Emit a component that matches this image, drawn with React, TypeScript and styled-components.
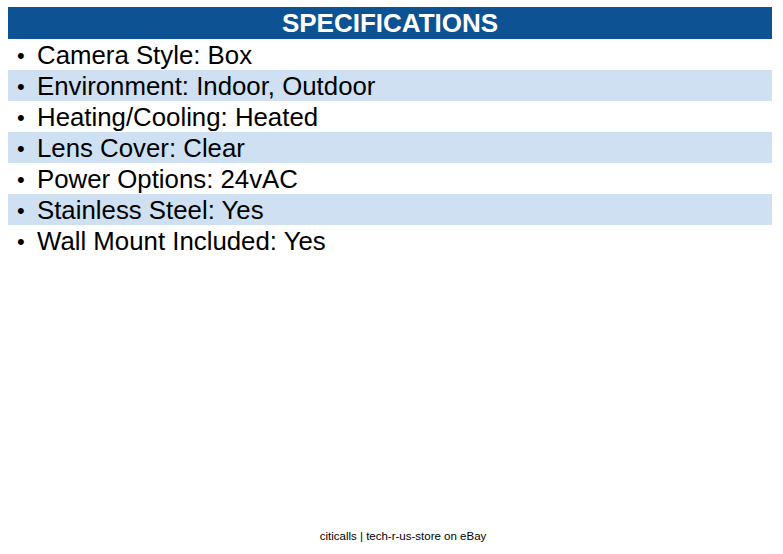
import React from "react";
import styled, { createGlobalStyle } from "styled-components";

const Global = createGlobalStyle`
  html, body { margin: 0; padding: 0; background: #ffffff; }
  body { font-family: "Liberation Sans", Arial, sans-serif; }
`;

const Page = styled.div`
  width: 783px;
  height: 554px;
  display: flex;
  flex-direction: column;
  box-sizing: border-box;
  padding: 7px 11px 0 8px;
`;

const Header = styled.div`
  background: #0d5293;
  color: #ffffff;
  font-weight: bold;
  font-size: 26px;
  height: 32px;
  display: flex;
  align-items: center;
  justify-content: center;
`;

const List = styled.ul`
  list-style: none;
  margin: 0;
  padding: 0;
`;

const Row = styled.li<{ $alt: boolean }>`
  height: 31px;
  box-sizing: border-box;
  padding-top: 2px;
  display: flex;
  align-items: center;
  background: ${(p) => (p.$alt ? "#cfe0f2" : "#ffffff")};
  font-size: 25.8px;
  color: #000000;
`;

const Bullet = styled.span`
  width: 29px;
  padding-left: 9px;
  box-sizing: border-box;
  font-size: 22px;
`;

const Spacer = styled.div`
  flex: 1;
`;

const Footer = styled.div`
  text-align: center;
  font-size: 11.5px;
  color: #000;
  height: 24px;
  padding-left: 26px;
`;

const items = [
  "Camera Style: Box",
  "Environment: Indoor, Outdoor",
  "Heating/Cooling: Heated",
  "Lens Cover: Clear",
  "Power Options: 24vAC",
  "Stainless Steel: Yes",
  "Wall Mount Included: Yes",
];

export default function App() {
  return (
    <>
      <Global />
      <Page>
        <Header>SPECIFICATIONS</Header>
        <List>
          {items.map((t, i) => (
            <Row key={t} $alt={i % 2 === 1}>
              <Bullet>•</Bullet>
              <span>{t}</span>
            </Row>
          ))}
        </List>
        <Spacer />
        <Footer>citicalls | tech-r-us-store on eBay</Footer>
      </Page>
    </>
  );
}
